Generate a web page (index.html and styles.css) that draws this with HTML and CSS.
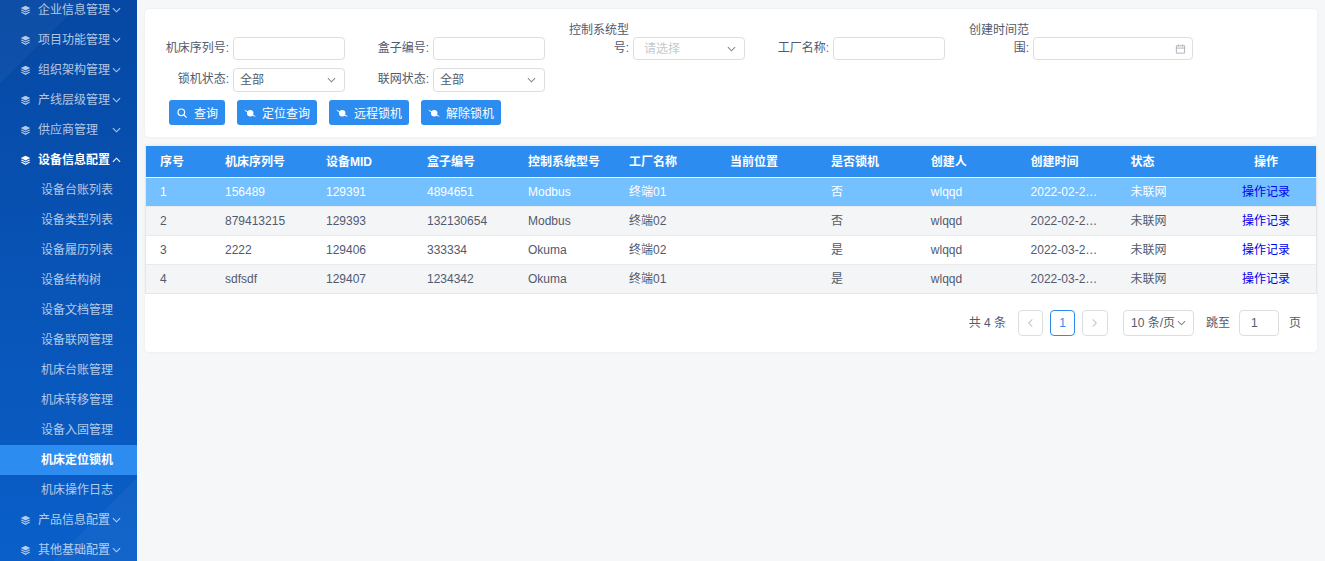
FILE: index.html
```html
<!DOCTYPE html>
<html>
<head>
  <meta charset="utf-8">
  <title>机床定位锁机</title>
  <link rel="stylesheet" href="styles.css">
</head>
<body>
  <svg class="svg-defs" width="0" height="0">
    <symbol id="layers" viewBox="0 0 12 12">
      <path d="M6 .8 11.2 3.4 6 6 .8 3.4z" fill="currentColor"/>
      <path d="M1.9 5 .8 5.7 6 8.3 11.2 5.7 10.1 5 6 7.1z" fill="currentColor"/>
      <path d="M1.9 7.3 .8 8 6 11 11.2 8 10.1 7.3 6 9.4z" fill="currentColor"/>
    </symbol>
    <symbol id="chevron" viewBox="0 0 10 6">
      <path d="M1 1 5 5 9 1" fill="none" stroke="currentColor" stroke-width="1.2"/>
    </symbol>
    <symbol id="planet" viewBox="0 0 12 12">
      <circle cx="6.2" cy="6.2" r="3.2" fill="currentColor"/>
      <path d="M.8 3.2C2.5 4 4 5.500 6 6.800 8 8 9.800 9 11.300 9.200" fill="none" stroke="currentColor" stroke-width="1"/>
    </symbol>
  </svg>

  <div class="layout">
    <aside class="sidebar">
      <ul class="menu">
        <li class="menu-title"><svg class="layer-icon"><use href="#layers"/></svg><span>企业信息管理</span><svg class="arrow"><use href="#chevron"/></svg></li>
        <li class="menu-title"><svg class="layer-icon"><use href="#layers"/></svg><span>项目功能管理</span><svg class="arrow"><use href="#chevron"/></svg></li>
        <li class="menu-title"><svg class="layer-icon"><use href="#layers"/></svg><span>组织架构管理</span><svg class="arrow"><use href="#chevron"/></svg></li>
        <li class="menu-title"><svg class="layer-icon"><use href="#layers"/></svg><span>产线层级管理</span><svg class="arrow"><use href="#chevron"/></svg></li>
        <li class="menu-title"><svg class="layer-icon"><use href="#layers"/></svg><span>供应商管理</span><svg class="arrow"><use href="#chevron"/></svg></li>
        <li class="menu-title open"><svg class="layer-icon"><use href="#layers"/></svg><span>设备信息配置</span><svg class="arrow up"><use href="#chevron"/></svg></li>
        <li class="menu-sub">设备台账列表</li>
        <li class="menu-sub">设备类型列表</li>
        <li class="menu-sub">设备履历列表</li>
        <li class="menu-sub">设备结构树</li>
        <li class="menu-sub">设备文档管理</li>
        <li class="menu-sub">设备联网管理</li>
        <li class="menu-sub">机床台账管理</li>
        <li class="menu-sub">机床转移管理</li>
        <li class="menu-sub">设备入固管理</li>
        <li class="menu-sub active">机床定位锁机</li>
        <li class="menu-sub">机床操作日志</li>
        <li class="menu-title"><svg class="layer-icon"><use href="#layers"/></svg><span>产品信息配置</span><svg class="arrow"><use href="#chevron"/></svg></li>
        <li class="menu-title"><svg class="layer-icon"><use href="#layers"/></svg><span>其他基础配置</span><svg class="arrow"><use href="#chevron"/></svg></li>
      </ul>
    </aside>

    <main class="content">
      <section class="card search-card">
        <div class="form-row first">
          <div class="form-item"><label>机床序列号:</label><input class="field" type="text"></div>
          <div class="form-item"><label>盒子编号:</label><input class="field" type="text"></div>
          <div class="form-item"><label>控制系统型号:</label><div class="field select placeholder">请选择<svg class="select-arrow"><use href="#chevron"/></svg></div></div>
          <div class="form-item"><label>工厂名称:</label><input class="field" type="text"></div>
          <div class="form-item"><label>创建时间范围:</label>
            <div class="field date">
              <svg class="calendar" viewBox="0 0 12 12"><path d="M1.500 2.500h9v8h-9zM1.500 5h9M3.800 1v2M8.200 1v2" fill="none" stroke="currentColor" stroke-width="1"/></svg>
            </div>
          </div>
        </div>
        <div class="form-row second">
          <div class="form-item"><label>锁机状态:</label><div class="field select">全部<svg class="select-arrow"><use href="#chevron"/></svg></div></div>
          <div class="form-item"><label>联网状态:</label><div class="field select">全部<svg class="select-arrow"><use href="#chevron"/></svg></div></div>
        </div>
        <div class="button-row">
          <button class="btn btn-small">
            <svg class="btn-icon" viewBox="0 0 12 12"><circle cx="5.300" cy="5.300" r="3.300" fill="none" stroke="currentColor" stroke-width="1.200"/><path d="M7.800 7.800 10.600 10.600" stroke="currentColor" stroke-width="1.200"/></svg>查询
          </button>
          <button class="btn"><svg class="btn-icon"><use href="#planet"/></svg>定位查询</button>
          <button class="btn"><svg class="btn-icon"><use href="#planet"/></svg>远程锁机</button>
          <button class="btn"><svg class="btn-icon"><use href="#planet"/></svg>解除锁机</button>
        </div>
      </section>

      <section class="card table-card">
        <table class="data-table">
          <colgroup>
            <col class="col-index">
            <col class="col-wide"><col class="col-wide"><col class="col-wide">
            <col class="col-wide"><col class="col-wide"><col class="col-wide">
            <col><col><col><col><col>
          </colgroup>
          <thead>
            <tr>
              <th>序号</th><th>机床序列号</th><th>设备MID</th><th>盒子编号</th><th>控制系统型号</th><th>工厂名称</th>
              <th>当前位置</th><th>是否锁机</th><th>创建人</th><th>创建时间</th><th>状态</th><th class="center">操作</th>
            </tr>
          </thead>
          <tbody>
            <tr class="selected">
              <td>1</td><td>156489</td><td>129391</td><td>4894651</td><td>Modbus</td><td>终端01</td>
              <td></td><td>否</td><td>wlqqd</td><td>2022-02-2…</td><td>未联网</td><td class="center"><a href="#">操作记录</a></td>
            </tr>
            <tr class="stripe">
              <td>2</td><td>879413215</td><td>129393</td><td>132130654</td><td>Modbus</td><td>终端02</td>
              <td></td><td>否</td><td>wlqqd</td><td>2022-02-2…</td><td>未联网</td><td class="center"><a href="#">操作记录</a></td>
            </tr>
            <tr>
              <td>3</td><td>2222</td><td>129406</td><td>333334</td><td>Okuma</td><td>终端02</td>
              <td></td><td>是</td><td>wlqqd</td><td>2022-03-2…</td><td>未联网</td><td class="center"><a href="#">操作记录</a></td>
            </tr>
            <tr class="stripe">
              <td>4</td><td>sdfsdf</td><td>129407</td><td>1234342</td><td>Okuma</td><td>终端01</td>
              <td></td><td>是</td><td>wlqqd</td><td>2022-03-2…</td><td>未联网</td><td class="center"><a href="#">操作记录</a></td>
            </tr>
          </tbody>
        </table>

        <div class="pager">
          <span class="pager-total">共 4 条</span>
          <span class="page-btn"><svg class="page-arrow prev"><use href="#chevron"/></svg></span>
          <span class="page-btn current">1</span>
          <span class="page-btn next-btn"><svg class="page-arrow next"><use href="#chevron"/></svg></span>
          <span class="page-size">10 条/页<svg class="select-arrow"><use href="#chevron"/></svg></span>
          <span class="pager-label">跳至</span>
          <span class="page-jump">1</span>
          <span class="pager-unit">页</span>
        </div>
      </section>
    </main>
  </div>
</body>
</html>
```

FILE: styles.css
```css
* {
  box-sizing: border-box;
}
html, body {
  margin: 0;
  height: 100%;
  overflow: hidden;
}
body {
  font-family: "Liberation Sans", "Noto Sans CJK SC", sans-serif;
  font-size: 12px;
  color: #515a6e;
  background: #f5f7f9;
}
.svg-defs {
  position: absolute;
}
.layout {
  display: flex;
  height: 100vh;
}

/* sidebar */
.sidebar {
  flex: 0 0 137px;
  overflow: hidden;
  background:
    linear-gradient(135deg, rgba(255, 255, 255, 0.03) 0, rgba(255, 255, 255, 0.03) 12%, transparent 12%),
    linear-gradient(135deg, transparent 88%, rgba(255, 255, 255, 0.04) 88%),
    linear-gradient(to bottom, #0648a3, #0a5fc9);
}
.menu {
  list-style: none;
  margin: -5px 0 0;
  padding: 0;
}
.menu-title, .menu-sub {
  height: 30px;
  line-height: 30px;
  color: rgba(255, 255, 255, 0.7);
  white-space: nowrap;
}
.menu-title {
  display: flex;
  align-items: center;
  padding-left: 20px;
}
.menu-title span {
  flex: 0 0 74px;
  margin-left: 7px;
}
.menu-title.open {
  color: #fff;
  font-weight: bold;
}
.menu-sub {
  padding-left: 41px;
}
.menu-sub.active {
  background: #2d8cf0;
  color: #fff;
  font-weight: bold;
}
.layer-icon {
  width: 11px;
  height: 11px;
}
.arrow {
  width: 9px;
  height: 6px;
}
.arrow.up {
  transform: rotate(180deg);
}

/* main area */
.content {
  flex: 1;
  min-width: 0;
  padding: 9px 8px 0;
}
.card {
  background: #fff;
  border-radius: 4px;
  box-shadow: 0 0 3px rgba(0, 0, 0, 0.06);
}
.search-card {
  height: 128px;
  padding: 12px 12px 0;
}
.form-row {
  display: flex;
}
.form-row.second {
  margin-top: 8px;
}
.form-item {
  display: flex;
  align-items: flex-end;
  margin-right: 12px;
}
.form-item label {
  flex: 0 0 72px;
  margin-right: 4px;
  padding-bottom: 3px;
  line-height: 18px;
  text-align: right;
}
.form-row.second label {
  padding-bottom: 4px;
}
.field {
  display: block;
  width: 112px;
  height: 23px;
  padding: 0 6px;
  line-height: 22px;
  border: 1px solid #dcdee2;
  border-radius: 4px;
  background: #fff;
  font-family: inherit;
  font-size: 12px;
  color: #515a6e;
  outline: none;
}
.form-row.second .field {
  height: 24px;
  line-height: 22px;
}
.select {
  display: flex;
  align-items: center;
  justify-content: space-between;
  padding-right: 8px;
}
.placeholder {
  padding-left: 10px;
  color: #c5c8ce;
}
.select-arrow {
  width: 9px;
  height: 6px;
  color: #808695;
}
.date {
  display: flex;
  align-items: center;
  justify-content: flex-end;
  width: 160px;
}
.calendar {
  width: 11px;
  height: 12px;
  color: #a8adb6;
}
.button-row {
  display: flex;
  gap: 12px;
  margin-top: 8px;
  padding-left: 12px;
}
.btn {
  display: flex;
  align-items: center;
  width: 80px;
  height: 25px;
  padding: 0 0 0 7px;
  border: none;
  border-radius: 3px;
  background: #2d8cf0;
  color: #fff;
  font-family: inherit;
  font-size: 12px;
}
.btn-small {
  width: 56px;
}
.btn-icon {
  width: 12px;
  height: 12px;
  margin-right: 6px;
}

/* table */
.table-card {
  height: 207px;
  margin-top: 8px;
}
.data-table {
  width: 100%;
  table-layout: fixed;
  border-collapse: separate;
  border-spacing: 0;
  border: 1px solid #e4e6ea;
  border-top: 1px solid #eef0f3;
}
.col-index {
  width: 65px;
}
.col-wide {
  width: 101px;
}
.data-table th, .data-table td {
  padding: 0 14px;
  line-height: 16px;
  text-align: left;
  white-space: nowrap;
  overflow: hidden;
}
.data-table th {
  height: 32px;
  background: #2d8cf0;
  color: #fff;
  font-weight: bold;
  border-bottom: 1px solid #fff;
}
.data-table td {
  height: 29px;
  border-bottom: 1px solid #e8eaec;
}
.data-table tbody tr:last-child td {
  height: 28px;
  border-bottom: none;
}
.data-table .center {
  text-align: center;
}
.data-table a {
  color: #0000ee;
  text-decoration: none;
}
.stripe td {
  background: #f4f5f7;
}
.selected td {
  background: #75c0ff;
  color: #fff;
}

/* pager */
.pager {
  display: flex;
  align-items: center;
  justify-content: flex-end;
  height: 26px;
  margin-top: 16px;
  padding-right: 16px;
  line-height: 16px;
}
.pager-total {
  margin-right: 12px;
}
.page-btn {
  display: flex;
  align-items: center;
  justify-content: center;
  width: 25px;
  height: 26px;
  margin-right: 7px;
  border: 1px solid #dcdee2;
  border-radius: 4px;
}
.page-btn.next-btn {
  width: 26px;
}
.page-btn.current {
  border-color: #2d8cf0;
  color: #2d8cf0;
}
.page-arrow {
  width: 9px;
  height: 6px;
  color: #c5c8ce;
}
.page-arrow.prev {
  transform: rotate(90deg);
}
.page-arrow.next {
  transform: rotate(-90deg);
}
.page-size {
  display: flex;
  align-items: center;
  justify-content: space-between;
  width: 71px;
  height: 26px;
  margin-left: 8px;
  padding: 0 7px;
  border: 1px solid #dcdee2;
  border-radius: 4px;
  white-space: nowrap;
}
.pager-label {
  margin-left: 12px;
}
.page-jump {
  width: 40px;
  height: 26px;
  margin: 0 10px 0 9px;
  padding-left: 11px;
  line-height: 24px;
  border: 1px solid #dcdee2;
  border-radius: 4px;
}
```
